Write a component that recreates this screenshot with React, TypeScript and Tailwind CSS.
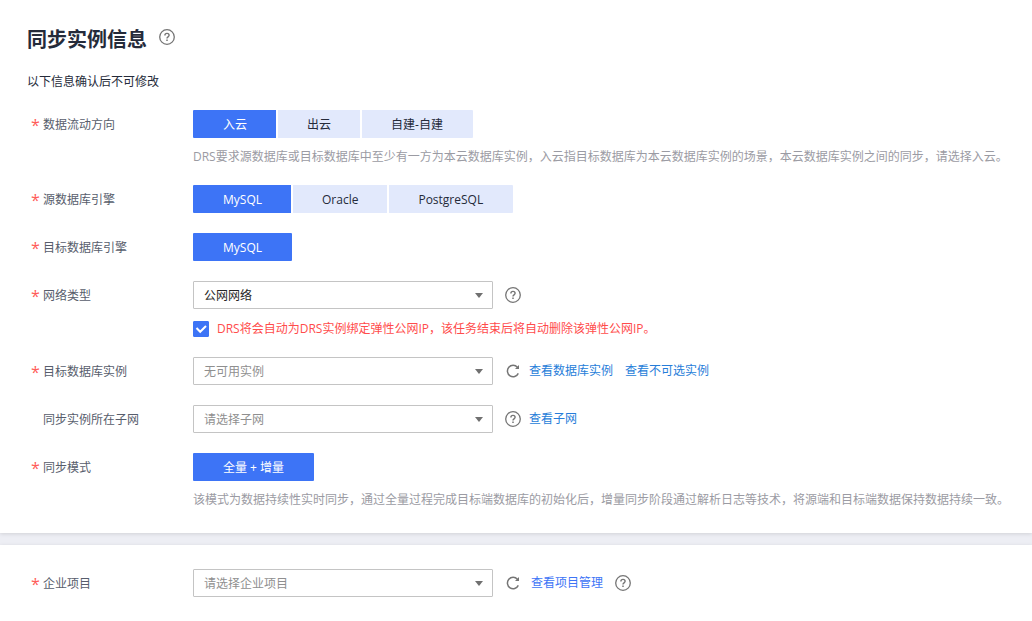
import React, { useState } from 'react'
import { clsx } from 'clsx'

interface SegmentedProps {
  labelId: string
  options: string[]
}

interface FormRowProps {
  id: string
  label: string
  required?: boolean
  group?: boolean
  children: React.ReactNode
}

interface SelectBoxProps {
  id: string
  options: string[]
  placeholder?: boolean
}

const HelpIcon = () => (
  <svg viewBox="0 0 16 16" className="w-4 h-4" fill="none" stroke="#757575">
    <circle cx="8" cy="8" r="7.3" strokeWidth="1.3" />
    <path d="M5.9 6.5C5.9 5.2 6.8 4.4 8 4.4s2.1.8 2.1 1.9c0 1.5-2.1 1.6-2.1 3.1" strokeWidth="1.4" />
    <path d="M8 10.5v1.4" strokeWidth="1.5" />
  </svg>
)

const RefreshIcon = () => (
  <svg viewBox="0 0 16 16" className="w-4 h-4" fill="none" stroke="#757575">
    <path d="M12.4 4.2A5.7 5.7 0 1 0 13.3 10.4" strokeWidth="1.5" />
    <path d="M14 2v4H10z" fill="#757575" stroke="none" />
  </svg>
)

const HelpButton = () => (
  <button type="button" aria-label="帮助" className="cursor-pointer">
    <HelpIcon />
  </button>
)

const RefreshButton = () => (
  <button type="button" aria-label="刷新" className="cursor-pointer">
    <RefreshIcon />
  </button>
)

const Segmented = ({ labelId, options }: SegmentedProps) => {
  const [active, setActive] = useState(options[0])

  return (
    <div role="group" aria-labelledby={labelId} className="flex gap-0.5 overflow-hidden rounded-[1px] w-fit">
      {options.map(option => (
        <button
          key={option}
          type="button"
          aria-pressed={option === active}
          onClick={() => setActive(option)}
          className={clsx(
            'h-7 pt-0.5 px-[29px] first:pl-[30px] last:pr-[30px] cursor-pointer',
            option === active ? 'bg-[#3d74f6] text-white' : 'bg-[#e2e9fc] text-[#252b3a]'
          )}
        >
          {option}
        </button>
      ))}
    </div>
  )
}

const SelectBox = ({ id, options, placeholder = false }: SelectBoxProps) => (
  <div className="relative w-[300px]">
    <select
      id={id}
      className={clsx(
        'block w-full h-7 pt-0.5 px-2.5 appearance-none rounded-[1px] border border-[#c4c4c4] bg-white',
        placeholder ? 'text-[#8f8f8f]' : 'text-[#252525]'
      )}
    >
      {options.map(option => (
        <option key={option}>{option}</option>
      ))}
    </select>
    <svg viewBox="0 0 8 5" className="absolute right-2.5 top-3 w-2 h-[5px] pointer-events-none">
      <path d="M0 0h8L4 5z" fill="#707070" />
    </svg>
  </div>
)

const FormRow = ({ id, label, required = true, group = false, children }: FormRowProps) => (
  <div className="flex items-start">
    <div className="flex w-[162px] h-7 pt-0.5 flex-shrink-0 items-center text-[#575d6c]">
      <span className="w-3 text-base leading-4 text-[#ff5c58]">{required && '*'}</span>
      {group ? <span id={id}>{label}</span> : <label htmlFor={id}>{label}</label>}
    </div>
    <div className="flex-1 min-w-0">{children}</div>
  </div>
)

const Hint = ({ children }: { children: React.ReactNode }) => (
  <p className="mt-2.5 leading-[17px] text-[#9b9ba3]">{children}</p>
)

const TextLink = ({ children, className = 'text-[#267dd9]' }: { children: React.ReactNode; className?: string }) => (
  <a href="#" className={className}>{children}</a>
)

export default function App() {
  const [bindIp, setBindIp] = useState(true)

  return (
    <div className="flex flex-col min-h-screen gap-3 bg-[#edeef4] text-xs font-['Open_Sans','Noto_Sans_CJK_SC',sans-serif]">
      <section className="pl-[27px] pr-4 pt-6 pb-[25px] bg-white shadow-[0_1px_4px_rgba(0,0,0,0.12)]">
        <div className="flex items-start gap-3 pt-[5px]">
          <h1 className="text-xl leading-[22px] font-bold text-[#252b3a]">同步实例信息</h1>
          <HelpButton />
        </div>
        <p className="mt-[23px] text-[#252b3a]">以下信息确认后不可修改</p>

        <div className="flex flex-col gap-5 pt-5 pl-1">
          <FormRow id="direction" label="数据流动方向" group>
            <Segmented labelId="direction" options={['入云', '出云', '自建-自建']} />
            <Hint>
              DRS要求源数据库或目标数据库中至少有一方为本云数据库实例，入云指目标数据库为本云数据库实例的场景，本云数据库实例之间的同步，请选择入云。
            </Hint>
          </FormRow>

          <FormRow id="source-engine" label="源数据库引擎" group>
            <Segmented labelId="source-engine" options={['MySQL', 'Oracle', 'PostgreSQL']} />
          </FormRow>

          <FormRow id="target-engine" label="目标数据库引擎" group>
            <Segmented labelId="target-engine" options={['MySQL']} />
          </FormRow>

          <FormRow id="network" label="网络类型">
            <div className="flex items-center gap-3">
              <SelectBox id="network" options={['公网网络']} />
              <HelpButton />
            </div>
            <div className="flex items-center gap-2 mt-3 h-4">
              <span className="relative w-4 h-4">
                <input
                  id="bind-ip"
                  type="checkbox"
                  checked={bindIp}
                  onChange={e => setBindIp(e.target.checked)}
                  className="peer block w-4 h-4 appearance-none rounded-[1px] border border-[#c4c4c4] checked:border-[#3d74f6] checked:bg-[#3d74f6]"
                />
                <svg
                  viewBox="0 0 16 16"
                  className="absolute inset-0 hidden w-4 h-4 pointer-events-none peer-checked:block"
                  fill="none"
                  stroke="#fff"
                  strokeWidth="2"
                >
                  <path d="M3.5 7l3.7 3.8L13 5" />
                </svg>
              </span>
              <label htmlFor="bind-ip" className="text-[#ff4c4c]">
                DRS将会自动为DRS实例绑定弹性公网IP，该任务结束后将自动删除该弹性公网IP。
              </label>
            </div>
          </FormRow>

          <FormRow id="target-instance" label="目标数据库实例">
            <div className="flex items-center gap-3">
              <SelectBox id="target-instance" options={['无可用实例']} placeholder />
              <div className="flex items-center gap-2">
                <RefreshButton />
                <TextLink>查看数据库实例</TextLink>
              </div>
              <TextLink>查看不可选实例</TextLink>
            </div>
          </FormRow>

          <FormRow id="subnet" label="同步实例所在子网" required={false}>
            <div className="flex items-center gap-3">
              <SelectBox id="subnet" options={['请选择子网']} placeholder />
              <div className="flex items-center gap-2">
                <HelpButton />
                <TextLink>查看子网</TextLink>
              </div>
            </div>
          </FormRow>

          <FormRow id="mode" label="同步模式" group>
            <Segmented labelId="mode" options={['全量 + 增量']} />
            <Hint>
              该模式为数据持续性实时同步，通过全量过程完成目标端数据库的初始化后，增量同步阶段通过解析日志等技术，将源端和目标端数据保持数据持续一致。
            </Hint>
          </FormRow>
        </div>
      </section>

      <section className="flex-1 pl-[27px] pr-4 py-6 bg-white shadow-[0_1px_4px_rgba(0,0,0,0.12)]">
        <div className="pl-1">
          <FormRow id="project" label="企业项目">
            <div className="flex items-center gap-3">
              <SelectBox id="project" options={['请选择企业项目']} placeholder />
              <div className="flex items-center gap-2.5">
                <RefreshButton />
                <TextLink className="text-[#3d74f6]">查看项目管理</TextLink>
              </div>
              <HelpButton />
            </div>
          </FormRow>
        </div>
      </section>
    </div>
  )
}
